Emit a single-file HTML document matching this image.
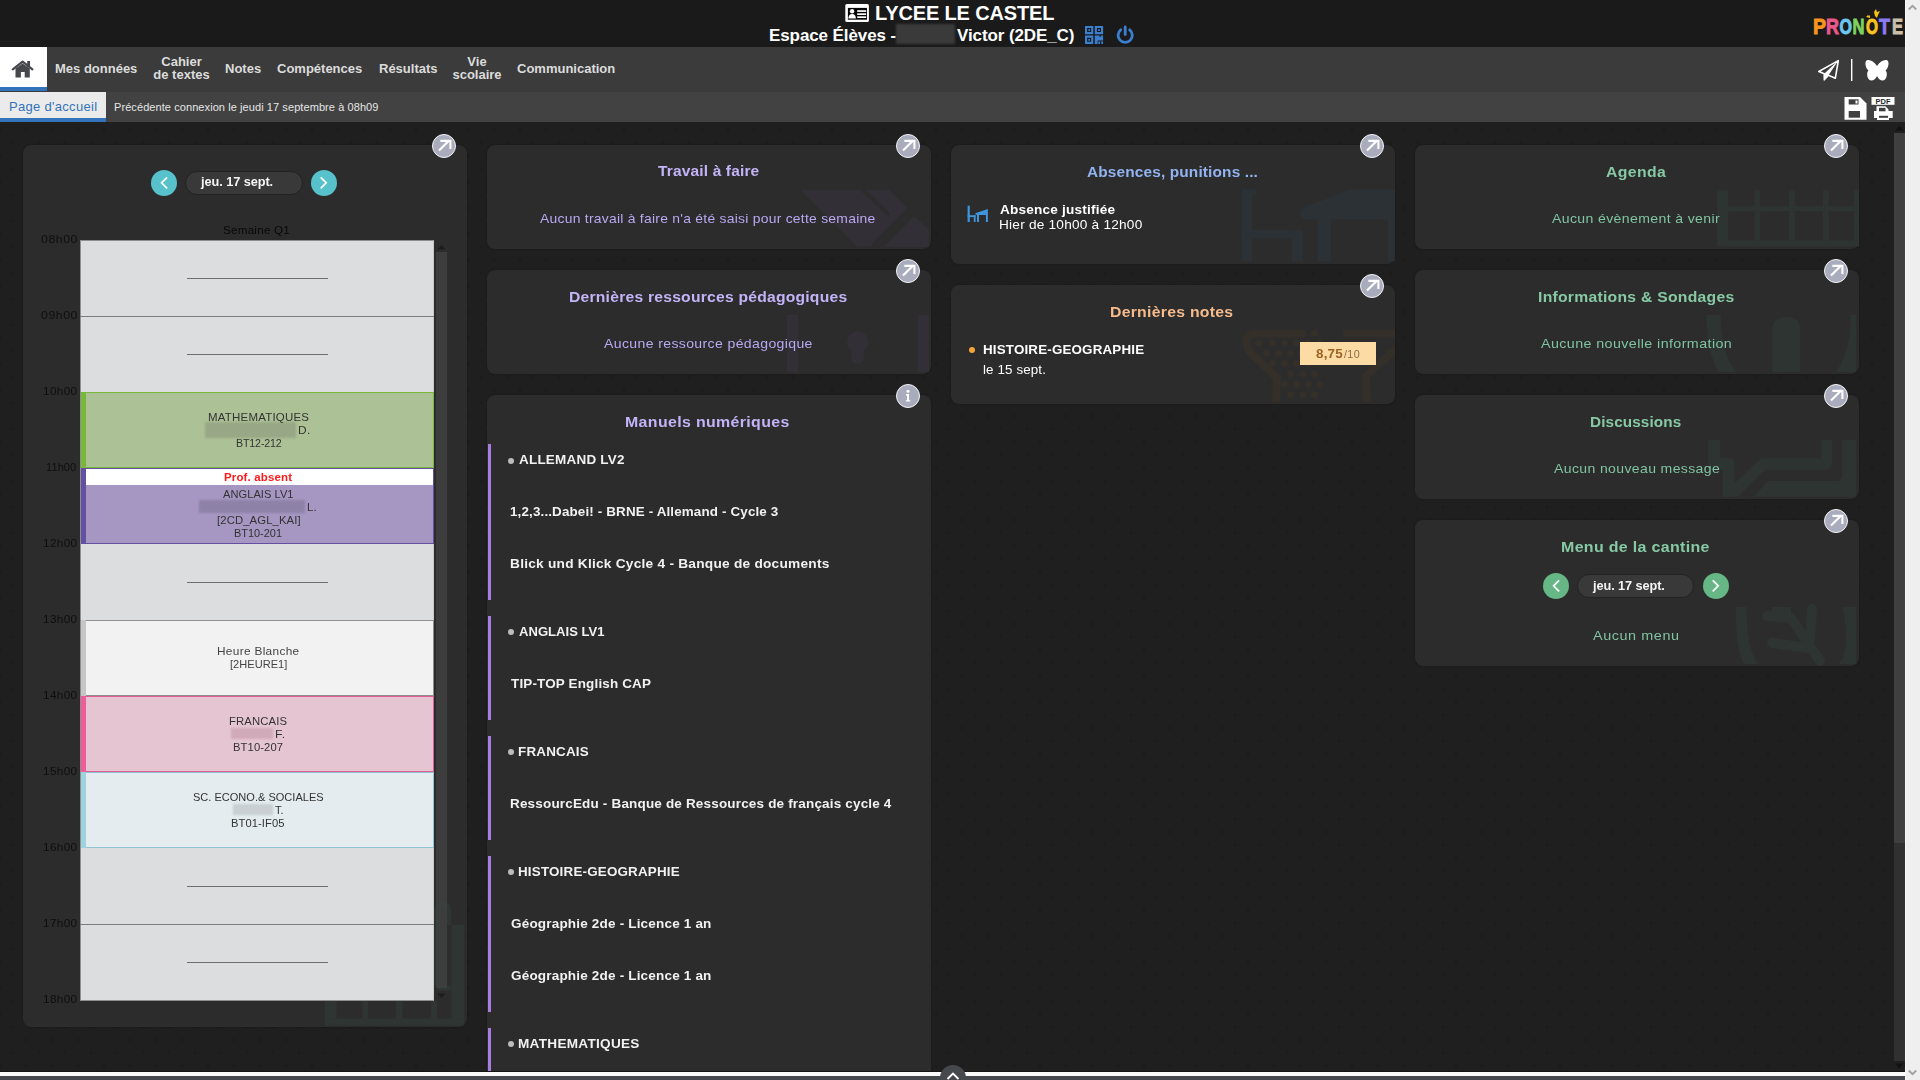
<!DOCTYPE html>
<html lang="fr"><head><meta charset="utf-8">
<style>
*{box-sizing:border-box;margin:0;padding:0}
html,body{width:1920px;height:1080px;overflow:hidden;background:#202020;font-family:"Liberation Sans",sans-serif}
.abs{position:absolute}
#hdr{position:absolute;left:0;top:0;width:1905px;height:47px;background:#1a1a1a}
#nav{position:absolute;left:0;top:47px;width:1905px;height:45px;background:#3b3b3b}
#sub{position:absolute;left:0;top:92px;width:1905px;height:30px;background:#424242}
#page{position:absolute;left:0;top:122px;width:1905px;height:950px;background-color:#1f1f1f;overflow:hidden;
 background-image:radial-gradient(circle at 13px 13px,#1c1c1c 0 1.3px,transparent 1.9px),radial-gradient(circle at 13px 13px,#1c1c1c 0 1.3px,transparent 1.9px);
 background-size:26px 26px,26px 26px;background-position:13px -5px,0px 8px}
#vscroll{position:absolute;left:1905px;top:0;width:15px;height:1080px;background:#efefef;border-left:1px solid #fafafa}
.card{position:absolute;background:#2c2c2c;border-radius:8px;box-shadow:0 0 2px rgba(0,0,0,.35);overflow:hidden}
.exp{position:absolute;width:24px;height:24px;border-radius:50%;background:#a8acbd;border:1px solid #f4f4f4}
.t{position:absolute;white-space:nowrap}
.nav-it{position:absolute;color:#dcdcdc;font-weight:bold;font-size:13px;text-align:center;line-height:13px;white-space:nowrap}
</style></head><body>
<div id="hdr">
 <svg class="abs" style="left:0;top:0" width="1905" height="47" viewBox="0 0 1905 47">
  <rect x="845.3" y="3.9" width="23.6" height="18.1" rx="1.6" fill="#fff"/>
  <rect x="847.9" y="7.9" width="19.1" height="11.8" fill="#050505"/>
  <circle cx="852.1" cy="11.3" r="2.2" fill="#fff"/>
  <path d="M848.4,18.6 Q848.4,13.9 852.1,13.9 Q855.9,13.9 855.9,18.6 Z" fill="#fff"/>
  <rect x="857.2" y="10.2" width="9" height="1.7" fill="#fff"/>
  <rect x="857.2" y="13.3" width="9" height="1.7" fill="#fff"/>
  <rect x="857.2" y="16.3" width="9" height="1.7" fill="#fff"/>
  <g fill="#3b7fd0" fill-rule="evenodd">
   <path d="M1085,25.9h8.3v8.3h-8.3zM1087.1,28v4.1h4.1v-4.1zM1088.3,29.2h1.8v1.8h-1.8z"/>
   <path d="M1094.8,25.9h8.3v8.3h-8.3zM1096.9,28v4.1h4.1v-4.1zM1098.1,29.2h1.8v1.8h-1.8z"/>
   <path d="M1085,35.6h8.3v8.3h-8.3zM1087.1,37.7v4.1h4.1v-4.1zM1088.3,38.9h1.8v1.8h-1.8z"/>
   <path d="M1094.8,35.6h4.6v1.2h1.5v-1.2h2.2v5h-5.5v3.3h-2.8z"/>
   <rect x="1098.3" y="41.5" width="1.8" height="2.4"/><rect x="1101.2" y="41.5" width="1.9" height="2.4"/>
  </g>
  <path d="M1120.7,29.8 A7.1,7.1 0 1 0 1129.7,29.8" fill="none" stroke="#3b7fd0" stroke-width="2.8" stroke-linecap="round"/>
  <line x1="1125.2" y1="27" x2="1125.2" y2="34.5" stroke="#3b7fd0" stroke-width="2.8" stroke-linecap="round"/>
 </svg>
 <div class="abs" style="left:875px;top:3px;font:bold 20px/20px 'Liberation Sans';color:#fff;white-space:nowrap;letter-spacing:-0.15px">LYCEE LE CASTEL</div>
 <div class="abs" style="left:769px;top:27px;font:bold 17px/17px 'Liberation Sans';color:#fff;white-space:nowrap;letter-spacing:-0.1px">Espace Élèves -</div>
 <div class="abs" style="left:896px;top:24px;width:59px;height:20px;background:#3a3a3a;filter:blur(1px)"></div>
 <div class="abs" style="left:957px;top:27px;font:bold 17px/17px 'Liberation Sans';color:#fff;white-space:nowrap;letter-spacing:-0.1px">Victor (2DE_C)</div>
<svg class="abs" style="left:1805px;top:10px" width="100" height="30" viewBox="1805 10 100 30">
  <g font-family="Liberation Sans" font-weight="bold" font-size="21.5">
   <text x="1813" y="34" textLength="13" lengthAdjust="spacingAndGlyphs" fill="#f7941d" stroke="#f7941d" stroke-width="0.9">P</text>
   <text x="1826" y="34" textLength="13" lengthAdjust="spacingAndGlyphs" fill="#e8588a" stroke="#e8588a" stroke-width="0.9">R</text>
   <text x="1839.5" y="34" textLength="12.5" lengthAdjust="spacingAndGlyphs" fill="#6cc8f0" stroke="#6cc8f0" stroke-width="0.9">O</text>
   <text x="1852.5" y="34" textLength="12" lengthAdjust="spacingAndGlyphs" fill="#7ed35e" stroke="#7ed35e" stroke-width="0.9">N</text>
   <text x="1866" y="34" textLength="12" lengthAdjust="spacingAndGlyphs" fill="#f9c31f" stroke="#f9c31f" stroke-width="0.9">O</text>
   <text x="1879" y="34" textLength="11" lengthAdjust="spacingAndGlyphs" fill="#8a7cf0" stroke="#8a7cf0" stroke-width="0.9">T</text>
   <text x="1892" y="34" textLength="11" lengthAdjust="spacingAndGlyphs" fill="#c8bfa6" stroke="#c8bfa6" stroke-width="0.9">E</text>
  </g>
 </svg>
 <svg class="abs" style="left:1865px;top:9px" width="24" height="12" viewBox="0 0 24 12">
  <path d="M1,8 l2,-2 l1,1 l1,-1 l0,3 z" fill="#f2c40f"/>
  <path d="M9,3 l2,-3 l1,3 l3,-1 l-2,4 l-1,3 l-2,-2 z" fill="#f2c40f"/>
 </svg>
</div>
<div id="nav">
 <div class="abs" style="left:0;top:0;width:47px;height:40px;background:#fff"></div>
 <div class="abs" style="left:0;top:40px;width:47px;height:4px;background:#3273ba"></div>
 <svg class="abs" style="left:0;top:0" width="47" height="44" viewBox="0 47 47 44">
  <polyline points="12.8,69.3 22.6,61.6 32.4,69.3" fill="none" stroke="#45474c" stroke-width="2.2" stroke-linecap="round" stroke-linejoin="round"/>
  <rect x="27.2" y="61" width="2.8" height="5.5" fill="#45474c"/>
  <path d="M15.5,68.5 L22.6,63.6 L29.8,68.5 L29.8,77.5 L24.7,77.5 L24.7,72 L20.9,72 L20.9,77.5 L15.5,77.5 Z" fill="#45474c"/>
 </svg>
 <div class="nav-it" style="left:55px;top:15px">Mes données</div>
 <div class="nav-it" style="left:150px;top:8.4px;width:63px">Cahier<br>de textes</div>
 <div class="nav-it" style="left:225px;top:15px">Notes</div>
 <div class="nav-it" style="left:277px;top:15px">Compétences</div>
 <div class="nav-it" style="left:379px;top:15px">Résultats</div>
 <div class="nav-it" style="left:447px;top:8.4px;width:60px">Vie<br>scolaire</div>
 <div class="nav-it" style="left:517px;top:15px">Communication</div>
 <svg class="abs" style="left:0;top:0" width="1905" height="44" viewBox="0 47 1905 44">
  <path d="M1818.8,71.5 L1838.3,60.6 L1835.3,78.3 L1828.5,75.2 L1824.3,79.8 L1824.2,73.8 Z" fill="none" stroke="#fff" stroke-width="1.6" stroke-linejoin="round"/>
  <path d="M1824.2,73.8 L1838.3,60.6 L1828.5,75.2 L1824.3,79.8 Z" fill="#fff"/>
  <rect x="1851" y="59" width="1.4" height="22" fill="#fff"/>
  <path d="M1877,66 C1874,61 1869,59 1866.5,60.5 C1864.5,62 1865.5,68.5 1868.5,70.5 C1866,72.5 1867,80 1871,80.5 C1873.5,80.7 1876,78.5 1877,76 C1878,78.5 1880.5,80.7 1883,80.5 C1887,80 1888,72.5 1885.5,70.5 C1888.5,68.5 1889.5,62 1887.5,60.5 C1885,59 1880,61 1877,66 Z" fill="#fff"/>
 </svg>
</div>
<div id="sub">
 <div class="abs" style="left:0;top:0px;width:106px;height:26px;background:#ebebeb"></div>
 <div class="abs" style="left:0;top:26px;width:106px;height:4px;background:#3273ba"></div>
 <div class="abs" style="left:9px;top:8px;font:13px/13px 'Liberation Sans';color:#3273ba;white-space:nowrap;letter-spacing:0.3px">Page d'accueil</div>
 <div class="abs" style="left:114px;top:10px;font:11px/11px 'Liberation Sans';color:#e6e6e6;white-space:nowrap;letter-spacing:0.08px">Précédente connexion le jeudi 17 septembre à 08h09</div>
 <svg class="abs" style="left:0;top:0" width="1905" height="30" viewBox="0 92 1905 30">
  <path d="M1844.5,97 L1860,97 L1866.5,103.5 L1866.5,119.8 L1844.5,119.8 Z" fill="#fff"/>
  <rect x="1848.7" y="99.3" width="9.8" height="5.2" fill="#3f3f3f"/>
  <rect x="1855.5" y="100.5" width="2" height="3" fill="#fff"/>
  <rect x="1848.7" y="111" width="11.3" height="6.7" fill="#3f3f3f"/>
  <rect x="1871.5" y="97" width="23" height="7.8" fill="#fff"/>
  <text x="1883" y="103.8" text-anchor="middle" font-family="Liberation Sans" font-weight="bold" font-size="7.5" fill="#2a2a2a">PDF</text>
  <path d="M1876.5,106.3 L1885.5,106.3 L1888.5,109.5 L1888.5,111 L1892.7,111 L1892.7,118 L1889,118 L1889,120 L1877,120 L1877,118 L1874,118 L1874,111 L1876.5,111 Z" fill="#fff"/>
  <rect x="1879" y="107.8" width="6.5" height="3.5" fill="#3f3f3f"/>
  <rect x="1879" y="115.8" width="9" height="2" fill="#3f3f3f"/>
 </svg>
</div>

<div id="page"></div>
<div class='card' style='left:23px;top:145px;width:444px;height:882px'></div>
<div class='card' style='left:487px;top:145px;width:444px;height:104px'></div>
<div class='card' style='left:487px;top:270px;width:444px;height:104px'></div>
<div class='card' style='left:487px;top:395px;width:444px;height:720px'></div>
<div class='card' style='left:951px;top:145px;width:444px;height:119px'></div>
<div class='card' style='left:951px;top:285px;width:444px;height:119px'></div>
<div class='card' style='left:1415px;top:145px;width:444px;height:104px'></div>
<div class='card' style='left:1415px;top:270px;width:444px;height:104px'></div>
<div class='card' style='left:1415px;top:395px;width:444px;height:104px'></div>
<div class='card' style='left:1415px;top:520px;width:444px;height:146px'></div>
<svg class='abs' style='left:487px;top:145px' width='444' height='104' viewBox='487 145 444 104'><g fill='#323036'><path d='M801,190 L889,190 L907,208 L870,246 L857,246 Z'/><path d='M884,247 L914,216 L929,230 L929,247 Z'/></g><path d='M862,189 L889,215' stroke='#2c2c2c' stroke-width='4'/></svg>
<svg class='abs' style='left:487px;top:270px' width='444' height='104' viewBox='487 270 444 104'><g fill='#323036'><rect x='787' y='315' width='11' height='57'/><rect x='918' y='315' width='11' height='57'/><circle cx='857.7' cy='342' r='10.6'/><rect x='851.5' y='342' width='12.4' height='22' rx='6'/></g></svg>
<svg class='abs' style='left:951px;top:145px' width='444' height='119' viewBox='951 145 444 119'><g fill='#2b3135'><rect x='1241.7' y='189.6' width='15' height='5.4'/><rect x='1241.7' y='189.6' width='10.7' height='72'/><rect x='1241.7' y='230' width='60.8' height='8.6'/><rect x='1291.8' y='230' width='10.7' height='31.5'/><path d='M1302.5,219.4 Q1296,212 1305,207 L1349.4,189.6 H1395 V219.4 Z'/><rect x='1317.4' y='219' width='13.9' height='42.5'/><rect x='1387.8' y='219' width='7' height='42.5'/></g></svg>
<svg class='abs' style='left:951px;top:285px' width='444' height='119' viewBox='951 285 444 119'><g fill='none' stroke='#352f29' stroke-width='8' stroke-linejoin='round'><path d='M1305,333.5 L1256,333.5 Q1240,335 1250,352 L1277,378 L1276,402'/><path d='M1343,333.5 L1396,333.5 M1396,349 L1366,376 L1367,402'/></g><g fill='#352f29'><circle cx='1302.6' cy='333' r='3.5'/><circle cx='1314.6' cy='333' r='3.5'/><circle cx='1259' cy='343' r='3.5'/><circle cx='1272.5' cy='343' r='3.5'/><circle cx='1284.5' cy='343' r='3.5'/><circle cx='1296' cy='343' r='3.5'/><circle cx='1308' cy='343' r='3.5'/><circle cx='1320' cy='343' r='3.5'/><circle cx='1266.8' cy='353.6' r='3.5'/><circle cx='1278.4' cy='353.6' r='3.5'/><circle cx='1290.4' cy='353.6' r='3.5'/><circle cx='1302' cy='353.6' r='3.5'/><circle cx='1272.5' cy='363.6' r='3.5'/><circle cx='1284.5' cy='363.6' r='3.5'/><circle cx='1296' cy='363.6' r='3.5'/><circle cx='1308' cy='363.6' r='3.5'/><circle cx='1290.4' cy='374' r='3.5'/><circle cx='1302.6' cy='374' r='3.5'/><circle cx='1314.6' cy='374' r='3.5'/><circle cx='1284.5' cy='384.6' r='3.5'/><circle cx='1296.6' cy='384.6' r='3.5'/><circle cx='1308.5' cy='384.6' r='3.5'/><circle cx='1320' cy='384.6' r='3.5'/><circle cx='1290.4' cy='395' r='3.5'/><circle cx='1302.6' cy='395' r='3.5'/><circle cx='1314.6' cy='395' r='3.5'/></g></svg>
<svg class='abs' style='left:1415px;top:145px' width='444' height='104' viewBox='1415 145 444 104'><g fill='#2e3432'><rect x='1717.3' y='190.2' width='11' height='56.2'/><rect x='1754.5' y='190.2' width='5.7' height='56.2'/><rect x='1789' y='190.2' width='5.8' height='56.2'/><rect x='1823' y='190.2' width='5.9' height='56.2'/><rect x='1854' y='190.2' width='5' height='56.2'/><rect x='1728' y='206.1' width='131' height='5.3'/><rect x='1728' y='240.2' width='131' height='6.2'/></g></svg>
<svg class='abs' style='left:1415px;top:270px' width='444' height='104' viewBox='1415 270 444 104'><g fill='#2e3432'><path d='M1706.8,315 H1720.7 Q1720,350 1736.3,372 H1718.6 Q1706,350 1706.8,315 Z'/><path d='M1850.6,315 H1856 V372 H1835.9 Q1851,350 1850.6,315 Z'/><path d='M1772.2,372 V331 Q1772.2,316.8 1786.3,316.8 Q1800.4,316.8 1800.4,331 V372 Z'/></g></svg>
<svg class='abs' style='left:1415px;top:395px' width='444' height='104' viewBox='1415 395 444 104'><g fill='#2e3432'><path d='M1708,440 H1720 V457.8 H1728 Q1734.6,457.8 1734.6,464 V483 L1761,458.3 H1821.5 V440 H1832 V463 Q1832,469.7 1825,469.7 H1765 L1737.5,496.7 H1722.8 V469.7 H1708 Z'/><path d='M1842.2,440 H1856 V496.7 H1754 L1767.5,481 H1836 Q1842.2,481 1842.2,475 Z'/></g></svg>
<svg class='abs' style='left:1415px;top:520px' width='444' height='146' viewBox='1415 520 444 146'><g fill='#2e3432'><path d='M1736,607 H1746.8 Q1746,648 1758.2,664 H1744 Q1735,648 1736,607 Z'/><path d='M1842.6,607 H1856 V664 H1839.2 Q1851,648 1842.6,607 Z'/></g><g fill='none' stroke='#2e3432' stroke-width='10' stroke-linecap='round' stroke-linejoin='round'><path d='M1767,616 L1791,618 L1820,661'/><path d='M1772,643 L1808,648'/><path d='M1812,609 L1810,640'/></g><rect x='1772' y='607' width='19' height='8' fill='#2e3432'/></svg>
<div class='abs' style='left:80px;top:240px;width:354px;height:761px;background:#dcdddf;border-left:1px solid #8e8e8e;border-top:1px solid #8e8e8e;border-right:1px solid #c8c8c8;border-bottom:1px solid #8e8e8e'></div>
<div class='abs' style='left:80px;top:316px;width:354px;height:1px;background:#7c7c7c;'></div>
<div class='abs' style='left:80px;top:620px;width:354px;height:1px;background:#7c7c7c;'></div>
<div class='abs' style='left:80px;top:924px;width:354px;height:1px;background:#7c7c7c;'></div>
<div class='abs' style='left:187px;top:278px;width:141px;height:1px;background:#6e6e6e;'></div>
<div class='abs' style='left:187px;top:354px;width:141px;height:1px;background:#6e6e6e;'></div>
<div class='abs' style='left:187px;top:582px;width:141px;height:1px;background:#6e6e6e;'></div>
<div class='abs' style='left:187px;top:886px;width:141px;height:1px;background:#6e6e6e;'></div>
<div class='abs' style='left:187px;top:962px;width:141px;height:1px;background:#6e6e6e;'></div>
<div class='abs' style='left:81px;top:392px;width:353px;height:76px;background:#adc196;border:1px solid #78b83a'></div>
<div class='abs' style='left:81px;top:392px;width:5px;height:76px;background:#78b83a;'></div>
<div class='abs' style='left:81px;top:468px;width:353px;height:76px;background:#a596c2;border:1px solid #6450a3'></div>
<div class='abs' style='left:81px;top:468px;width:5px;height:76px;background:#6450a3;'></div>
<div class='abs' style='left:81px;top:620px;width:353px;height:76px;background:#f2f2f2;border:1px solid #8e8e8e'></div>
<div class='abs' style='left:81px;top:620px;width:5px;height:76px;background:#c6c6c6;'></div>
<div class='abs' style='left:81px;top:696px;width:353px;height:76px;background:#e6c5d2;border:1px solid #e35d95'></div>
<div class='abs' style='left:81px;top:696px;width:5px;height:76px;background:#ee5c9a;'></div>
<div class='abs' style='left:81px;top:772px;width:353px;height:76px;background:#e4ecef;border:1px solid #8fc4d1'></div>
<div class='abs' style='left:81px;top:772px;width:5px;height:76px;background:#9dd2df;'></div>
<div class='abs' style='left:86px;top:469px;width:347px;height:16px;background:#ffffff;'></div>
<div class='abs' style='left:205px;top:422px;width:91px;height:16px;background:#98a886;filter:blur(1px)'></div>
<div class='abs' style='left:199px;top:500px;width:106px;height:13px;background:#8f82a8;filter:blur(1px)'></div>
<div class='abs' style='left:231px;top:728px;width:42px;height:11px;background:#d0aab8;filter:blur(1px)'></div>
<div class='abs' style='left:233px;top:804px;width:40px;height:11px;background:#c9cfd2;filter:blur(1px)'></div>
<div class='abs' style='left:436px;top:252px;width:11px;height:736px;background:#3d3d3d;'></div>
<svg class='abs' style='left:436px;top:243px' width='11' height='8'><path d='M1.5,6.5 L5.5,2 L9.5,6.5 Z' fill='#1c1c1c'/></svg>
<svg class='abs' style='left:436px;top:992px' width='11' height='8'><path d='M1.5,1.5 L5.5,6 L9.5,1.5 Z' fill='#1c1c1c'/></svg>
<svg class='abs' style='left:23px;top:145px' width='444' height='882' viewBox='23 145 444 882'><g fill='rgba(52,72,68,0.33)'><rect x='325' y='1018.4' width='139.2' height='7.2'/><rect x='325' y='1001' width='11.5' height='17.4'/><rect x='362.4' y='1001' width='5.6' height='17.4'/><rect x='396' y='1001' width='6.5' height='17.4'/><rect x='431' y='1001' width='6' height='17.4'/><rect x='451.3' y='925' width='12.9' height='93.4'/><rect x='437' y='985.5' width='14.3' height='5'/><path d='M434,989 V912 Q434,901.5 443,901.5 Q451.3,901.5 451.3,912 V925 H445.5 V912 Q445.5,907.5 443,907.5 Q440,907.5 440,912 V985.5 H434 Z'/></g></svg>
<div class='abs' style='left:151px;top:170px;width:26px;height:26px;border-radius:50%;background:#57c2cc'><svg width='26' height='26' style='position:absolute;left:0;top:0'><path d='M15.5,7.9 L10.6,12.8 L15.5,17.7' fill='none' stroke='#fff' stroke-width='1.7' stroke-linecap='square' stroke-linejoin='miter'/></svg></div>
<div class='abs' style='left:311px;top:170px;width:26px;height:26px;border-radius:50%;background:#57c2cc'><svg width='26' height='26' style='position:absolute;left:0;top:0'><path d='M10.3,7.9 L15.2,12.8 L10.3,17.7' fill='none' stroke='#fff' stroke-width='1.7' stroke-linecap='square' stroke-linejoin='miter'/></svg></div>
<div class='abs' style='left:185px;top:171px;width:118px;height:24px;border-radius:12px;background:#393939;border:1px solid #222'></div>
<div class='abs' style='left:1543px;top:573px;width:26px;height:26px;border-radius:50%;background:#66b686'><svg width='26' height='26' style='position:absolute;left:0;top:0'><path d='M15.5,7.9 L10.6,12.8 L15.5,17.7' fill='none' stroke='#fff' stroke-width='1.7' stroke-linecap='square' stroke-linejoin='miter'/></svg></div>
<div class='abs' style='left:1703px;top:573px;width:26px;height:26px;border-radius:50%;background:#66b686'><svg width='26' height='26' style='position:absolute;left:0;top:0'><path d='M10.3,7.9 L15.2,12.8 L10.3,17.7' fill='none' stroke='#fff' stroke-width='1.7' stroke-linecap='square' stroke-linejoin='miter'/></svg></div>
<div class='abs' style='left:1577px;top:574px;width:117px;height:24px;border-radius:12px;background:#393939;border:1px solid #222'></div>
<svg class='abs' style='left:966px;top:204px' width='24' height='20' viewBox='966 204 24 20'><g fill='#3f95db'><rect x='967.6' y='205.7' width='2.2' height='16.3'/><rect x='967.6' y='215.2' width='7.9' height='1.9'/><rect x='973.8' y='215.2' width='1.8' height='6.8'/><path d='M975.2,213.2 L987.9,209 L987.9,222 L985.9,222 L985.9,215 L979,215 L979,222 L977,222 L977,215 Q975,214.8 975.2,213.2 Z'/></g></svg>
<div class='abs' style='left:969px;top:346.5px;width:6px;height:6px;border-radius:50%;background:#f5a33b'></div>
<div class='abs' style='left:1300px;top:342px;width:76px;height:23px;background:#fddba5;'></div>
<div class='abs' style='left:488px;top:444px;width:3px;height:156px;background:#a77de0;'></div>
<div class='abs' style='left:508px;top:457.5px;width:6px;height:6px;border-radius:50%;background:#bdbdbd'></div>
<div class='abs' style='left:488px;top:616px;width:3px;height:104px;background:#a77de0;'></div>
<div class='abs' style='left:508px;top:629px;width:6px;height:6px;border-radius:50%;background:#bdbdbd'></div>
<div class='abs' style='left:488px;top:736px;width:3px;height:104px;background:#a77de0;'></div>
<div class='abs' style='left:508px;top:749px;width:6px;height:6px;border-radius:50%;background:#bdbdbd'></div>
<div class='abs' style='left:488px;top:856px;width:3px;height:156px;background:#a77de0;'></div>
<div class='abs' style='left:508px;top:869px;width:6px;height:6px;border-radius:50%;background:#bdbdbd'></div>
<div class='abs' style='left:488px;top:1028px;width:3px;height:52px;background:#a77de0;'></div>
<div class='abs' style='left:508px;top:1041px;width:6px;height:6px;border-radius:50%;background:#bdbdbd'></div>
<div class='abs' style='left:0;top:1071px;width:1905px;height:1px;background:#151515;z-index:5'></div>
<div class='abs' style='left:0;top:1072px;width:1905px;height:4px;background:#fafafa;z-index:5'></div>
<div class='abs' style='left:0;top:1076px;width:1905px;height:4px;background:#45484d;z-index:5'></div>
<div class='abs' style='left:940px;top:1065px;width:26px;height:26px;border-radius:50%;background:#45484d;z-index:6'><svg width='26' height='26' style='position:absolute;left:0;top:0'><path d='M7.5,14 L13,8.5 L18.5,14' fill='none' stroke='#fff' stroke-width='1.8'/></svg></div>
<div class='abs' style='left:1894px;top:133px;width:10.5px;height:928px;background:#303030;'></div>
<div class='abs' style='left:1894px;top:133px;width:10.5px;height:710px;background:#3f3f3f;'></div>
<div class='abs' style='left:1904.5px;top:122px;width:0.8px;height:950px;background:#151515;'></div>
<svg class='abs' style='left:1894px;top:1062px' width='11' height='9'><path d='M1.5,1.5 L5.5,6.5 L9.5,1.5 Z' fill='#121212'/></svg>
<svg class='abs' style='left:1894px;top:124px' width='11' height='8'><path d='M1.5,6.5 L5.5,2 L9.5,6.5 Z' fill='#121212'/></svg>
<svg class='abs' style='left:1905px;top:0;z-index:7' width='15' height='1080'><path d='M3.8,9.5 L7.5,5.8 L11.2,9.5' fill='none' stroke='#a3a3a3' stroke-width='2'/><path d='M3.8,1070.5 L7.5,1074.2 L11.2,1070.5' fill='none' stroke='#a3a3a3' stroke-width='2'/></svg>
<div class='exp' style='left:432px;top:134px'><svg width='24' height='24' viewBox='0 0 24 24' style='position:absolute;left:-1px;top:-1px'><path d='M7,16.6 L17.4,6.2 M8.4,6.9 H18.4 V15' fill='none' stroke='#fff' stroke-width='2.1'/></svg></div>
<div class='exp' style='left:896px;top:134px'><svg width='24' height='24' viewBox='0 0 24 24' style='position:absolute;left:-1px;top:-1px'><path d='M7,16.6 L17.4,6.2 M8.4,6.9 H18.4 V15' fill='none' stroke='#fff' stroke-width='2.1'/></svg></div>
<div class='exp' style='left:896px;top:259px'><svg width='24' height='24' viewBox='0 0 24 24' style='position:absolute;left:-1px;top:-1px'><path d='M7,16.6 L17.4,6.2 M8.4,6.9 H18.4 V15' fill='none' stroke='#fff' stroke-width='2.1'/></svg></div>
<div class='exp' style='left:1360px;top:134px'><svg width='24' height='24' viewBox='0 0 24 24' style='position:absolute;left:-1px;top:-1px'><path d='M7,16.6 L17.4,6.2 M8.4,6.9 H18.4 V15' fill='none' stroke='#fff' stroke-width='2.1'/></svg></div>
<div class='exp' style='left:1360px;top:274px'><svg width='24' height='24' viewBox='0 0 24 24' style='position:absolute;left:-1px;top:-1px'><path d='M7,16.6 L17.4,6.2 M8.4,6.9 H18.4 V15' fill='none' stroke='#fff' stroke-width='2.1'/></svg></div>
<div class='exp' style='left:1824px;top:134px'><svg width='24' height='24' viewBox='0 0 24 24' style='position:absolute;left:-1px;top:-1px'><path d='M7,16.6 L17.4,6.2 M8.4,6.9 H18.4 V15' fill='none' stroke='#fff' stroke-width='2.1'/></svg></div>
<div class='exp' style='left:1824px;top:259px'><svg width='24' height='24' viewBox='0 0 24 24' style='position:absolute;left:-1px;top:-1px'><path d='M7,16.6 L17.4,6.2 M8.4,6.9 H18.4 V15' fill='none' stroke='#fff' stroke-width='2.1'/></svg></div>
<div class='exp' style='left:1824px;top:384px'><svg width='24' height='24' viewBox='0 0 24 24' style='position:absolute;left:-1px;top:-1px'><path d='M7,16.6 L17.4,6.2 M8.4,6.9 H18.4 V15' fill='none' stroke='#fff' stroke-width='2.1'/></svg></div>
<div class='exp' style='left:1824px;top:509px'><svg width='24' height='24' viewBox='0 0 24 24' style='position:absolute;left:-1px;top:-1px'><path d='M7,16.6 L17.4,6.2 M8.4,6.9 H18.4 V15' fill='none' stroke='#fff' stroke-width='2.1'/></svg></div>
<div class='exp' style='left:896px;top:384px'><svg width='24' height='24' viewBox='0 0 24 24' style='position:absolute;left:-1px;top:-1px'><circle cx='12' cy='7.3' r='1.5' fill='#fff'/><path d='M10,10 L13,10 L13,16.2 L14.3,16.2 L14.3,17.6 L9.8,17.6 L9.8,16.2 L11,16.2 L11,11.4 L10,11.4 Z' fill='#fff'/></svg></div>
<div class='t' style='left:657.5px;top:163.29px;font-size:15px;line-height:15px;font-weight:bold;letter-spacing:0.147px;color:#c3b3f7;transform:scaleX(1.0331);transform-origin:0 0;'>Travail à faire</div>
<div class='t' style='left:540.3px;top:211.99px;font-size:13px;line-height:13px;font-weight:normal;letter-spacing:0.242px;color:#b9a8f2;transform:scaleX(1.0684);transform-origin:0 0;'>Aucun travail à faire n'a été saisi pour cette semaine</div>
<div class='t' style='left:568.76px;top:288.80px;font-size:15px;line-height:15px;font-weight:bold;letter-spacing:0.225px;color:#c3b3f7;transform:scaleX(1.0437);transform-origin:0 0;'>Dernières ressources pédagogiques</div>
<div class='t' style='left:604.0px;top:337.49px;font-size:13px;line-height:13px;font-weight:normal;letter-spacing:0.34px;color:#b9a8f2;transform:scaleX(1.0813);transform-origin:0 0;'>Aucune ressource pédagogique</div>
<div class='t' style='left:625.34px;top:413.80px;font-size:15px;line-height:15px;font-weight:bold;letter-spacing:0.333px;color:#c3b3f7;transform:scaleX(1.0608);transform-origin:0 0;'>Manuels numériques</div>
<div class='t' style='left:1086.7px;top:163.79px;font-size:15px;line-height:15px;font-weight:bold;letter-spacing:0.133px;color:#92b3f0;transform:scaleX(1.0276);transform-origin:0 0;'>Absences, punitions ...</div>
<div class='t' style='left:1110.35px;top:303.80px;font-size:15px;line-height:15px;font-weight:bold;letter-spacing:0.261px;color:#f6bb8c;transform:scaleX(1.0514);transform-origin:0 0;'>Dernières notes</div>
<div class='t' style='left:1606.0px;top:163.79px;font-size:15px;line-height:15px;font-weight:bold;letter-spacing:0.365px;color:#86c9a4;transform:scaleX(1.0524);transform-origin:0 0;'>Agenda</div>
<div class='t' style='left:1552.2px;top:211.99px;font-size:13px;line-height:13px;font-weight:normal;letter-spacing:0.339px;color:#7fc3a0;transform:scaleX(1.0824);transform-origin:0 0;'>Aucun évènement à venir</div>
<div class='t' style='left:1537.85px;top:288.80px;font-size:15px;line-height:15px;font-weight:bold;letter-spacing:0.25px;color:#86c9a4;transform:scaleX(1.048);transform-origin:0 0;'>Informations &amp; Sondages</div>
<div class='t' style='left:1541.0px;top:337.49px;font-size:13px;line-height:13px;font-weight:normal;letter-spacing:0.373px;color:#7fc3a0;transform:scaleX(1.0979);transform-origin:0 0;'>Aucune nouvelle information</div>
<div class='t' style='left:1589.98px;top:413.80px;font-size:15px;line-height:15px;font-weight:bold;letter-spacing:0.114px;color:#86c9a4;transform:scaleX(1.02);transform-origin:0 0;'>Discussions</div>
<div class='t' style='left:1553.5px;top:462.29px;font-size:13px;line-height:13px;font-weight:normal;letter-spacing:0.352px;color:#7fc3a0;transform:scaleX(1.0781);transform-origin:0 0;'>Aucun nouveau message</div>
<div class='t' style='left:1561.34px;top:538.59px;font-size:15px;line-height:15px;font-weight:bold;letter-spacing:0.314px;color:#86c9a4;transform:scaleX(1.0641);transform-origin:0 0;'>Menu de la cantine</div>
<div class='t' style='left:1593.3px;top:628.99px;font-size:13px;line-height:13px;font-weight:normal;letter-spacing:0.518px;color:#7fc3a0;transform:scaleX(1.1075);transform-origin:0 0;'>Aucun menu</div>
<div class='t' style='left:1000.4px;top:202.69px;font-size:13px;line-height:13px;font-weight:bold;letter-spacing:0.196px;color:#ffffff;transform:scaleX(1.046);transform-origin:0 0;'>Absence justifiée</div>
<div class='t' style='left:999.35px;top:217.59px;font-size:13px;line-height:13px;font-weight:normal;letter-spacing:0.208px;color:#ffffff;transform:scaleX(1.0499);transform-origin:0 0;'>Hier de 10h00 à 12h00</div>
<div class='t' style='left:983.17px;top:342.99px;font-size:13px;line-height:13px;font-weight:bold;letter-spacing:0.16px;color:#ffffff;transform:scaleX(1.0292);transform-origin:0 0;'>HISTOIRE-GEOGRAPHIE</div>
<div class='t' style='left:983.17px;top:362.99px;font-size:13px;line-height:13px;font-weight:normal;letter-spacing:0.109px;color:#ffffff;transform:scaleX(1.029);transform-origin:0 0;'>le 15 sept.</div>
<div class='t' style='left:519.0px;top:453.39px;font-size:13px;line-height:13px;font-weight:bold;letter-spacing:0.211px;color:#f2f2f2;transform:scaleX(1.0364);transform-origin:0 0;'>ALLEMAND LV2</div>
<div class='t' style='left:509.87px;top:504.59px;font-size:13px;line-height:13px;font-weight:bold;letter-spacing:0.129px;color:#f2f2f2;transform:scaleX(1.0325);transform-origin:0 0;'>1,2,3...Dabei! - BRNE - Allemand - Cycle 3</div>
<div class='t' style='left:509.95px;top:556.69px;font-size:13px;line-height:13px;font-weight:bold;letter-spacing:0.224px;color:#f2f2f2;transform:scaleX(1.0534);transform-origin:0 0;'>Blick und Klick Cycle 4 - Banque de documents</div>
<div class='t' style='left:519.0px;top:624.99px;font-size:13px;line-height:13px;font-weight:bold;letter-spacing:0.024px;color:#f2f2f2;transform:scaleX(1.0042);transform-origin:0 0;'>ANGLAIS LV1</div>
<div class='t' style='left:511.0px;top:676.99px;font-size:13px;line-height:13px;font-weight:bold;letter-spacing:0.161px;color:#f2f2f2;transform:scaleX(1.0341);transform-origin:0 0;'>TIP-TOP English CAP</div>
<div class='t' style='left:517.97px;top:744.99px;font-size:13px;line-height:13px;font-weight:bold;letter-spacing:0.194px;color:#f2f2f2;transform:scaleX(1.0318);transform-origin:0 0;'>FRANCAIS</div>
<div class='t' style='left:509.96px;top:796.99px;font-size:13px;line-height:13px;font-weight:bold;letter-spacing:0.167px;color:#f2f2f2;transform:scaleX(1.0385);transform-origin:0 0;'>RessourcEdu - Banque de Ressources de français cycle 4</div>
<div class='t' style='left:517.97px;top:864.99px;font-size:13px;line-height:13px;font-weight:bold;letter-spacing:0.172px;color:#f2f2f2;transform:scaleX(1.0316);transform-origin:0 0;'>HISTOIRE-GEOGRAPHIE</div>
<div class='t' style='left:511.0px;top:916.99px;font-size:13px;line-height:13px;font-weight:bold;letter-spacing:0.172px;color:#f2f2f2;transform:scaleX(1.0401);transform-origin:0 0;'>Géographie 2de - Licence 1 an</div>
<div class='t' style='left:511.0px;top:968.99px;font-size:13px;line-height:13px;font-weight:bold;letter-spacing:0.172px;color:#f2f2f2;transform:scaleX(1.0401);transform-origin:0 0;'>Géographie 2de - Licence 1 an</div>
<div class='t' style='left:517.95px;top:1036.99px;font-size:13px;line-height:13px;font-weight:bold;letter-spacing:0.271px;color:#f2f2f2;transform:scaleX(1.0455);transform-origin:0 0;'>MATHEMATIQUES</div>
<div class='t' style='left:201.3px;top:175.49px;font-size:13px;line-height:13px;font-weight:bold;letter-spacing:-0.078px;color:#f4f4f4;transform:scaleX(0.9814);transform-origin:0 0;'>jeu. 17 sept.</div>
<div class='t' style='left:222.64px;top:224.68px;font-size:11px;line-height:11px;font-weight:normal;letter-spacing:0.236px;color:#080808;transform:scaleX(1.056);transform-origin:0 0;'>Semaine Q1</div>
<div class='t' style='left:1593.3px;top:578.99px;font-size:13px;line-height:13px;font-weight:bold;letter-spacing:-0.085px;color:#f4f4f4;transform:scaleX(0.9797);transform-origin:0 0;'>jeu. 17 sept.</div>
<div class='t' style='left:1315.6px;top:346.99px;font-size:13px;line-height:13px;font-weight:bold;letter-spacing:0.168px;color:#9c6526;transform:scaleX(1.0312);transform-origin:0 0;'>8,75</div>
<div class='t' style='left:1344.0px;top:349.53px;font-size:10px;line-height:10px;font-weight:normal;letter-spacing:0.334px;color:#8f6c45;transform:scaleX(1.0771);transform-origin:0 0;'>/10</div>
<div class='t' style='left:207.56px;top:412.18px;font-size:11px;line-height:11px;font-weight:normal;letter-spacing:0.211px;color:#333333;transform:scaleX(1.0426);transform-origin:0 0;'>MATHEMATIQUES</div>
<div class='t' style='left:298.32px;top:424.98px;font-size:11px;line-height:11px;font-weight:normal;letter-spacing:0.444px;color:#333333;transform:scaleX(1.08);transform-origin:0 0;'>D.</div>
<div class='t' style='left:235.73px;top:437.88px;font-size:11px;line-height:11px;font-weight:normal;letter-spacing:-0.148px;color:#333333;transform:scaleX(0.9681);transform-origin:0 0;'>BT12-212</div>
<div class='t' style='left:223.76px;top:471.88px;font-size:11px;line-height:11px;font-weight:bold;letter-spacing:0.154px;color:#ff1a1a;transform:scaleX(1.0419);transform-origin:0 0;'>Prof. absent</div>
<div class='t' style='left:223.3px;top:488.58px;font-size:11px;line-height:11px;font-weight:normal;letter-spacing:0.04px;color:#333333;transform:scaleX(1.0087);transform-origin:0 0;'>ANGLAIS LV1</div>
<div class='t' style='left:306.77px;top:501.88px;font-size:11px;line-height:11px;font-weight:normal;letter-spacing:0.155px;color:#333333;transform:scaleX(1.0343);transform-origin:0 0;'>L.</div>
<div class='t' style='left:216.77px;top:514.88px;font-size:11px;line-height:11px;font-weight:normal;letter-spacing:0.114px;color:#333333;transform:scaleX(1.0269);transform-origin:0 0;'>[2CD_AGL_KAI]</div>
<div class='t' style='left:234.2px;top:527.88px;font-size:11px;line-height:11px;font-weight:normal;letter-spacing:-0.017px;color:#333333;transform:scaleX(0.9962);transform-origin:0 0;'>BT10-201</div>
<div class='t' style='left:216.82px;top:645.98px;font-size:11px;line-height:11px;font-weight:normal;letter-spacing:0.288px;color:#444444;transform:scaleX(1.0775);transform-origin:0 0;'>Heure Blanche</div>
<div class='t' style='left:229.8px;top:658.88px;font-size:11px;line-height:11px;font-weight:normal;letter-spacing:0.02px;color:#444444;transform:scaleX(1.0044);transform-origin:0 0;'>[2HEURE1]</div>
<div class='t' style='left:229.47px;top:715.78px;font-size:11px;line-height:11px;font-weight:normal;letter-spacing:0.134px;color:#333333;transform:scaleX(1.0267);transform-origin:0 0;'>FRANCAIS</div>
<div class='t' style='left:274.58px;top:728.68px;font-size:11px;line-height:11px;font-weight:normal;letter-spacing:0.5px;color:#333333;transform:scaleX(1.12);transform-origin:0 0;'>F.</div>
<div class='t' style='left:233.18px;top:741.68px;font-size:11px;line-height:11px;font-weight:normal;letter-spacing:0.095px;color:#333333;transform:scaleX(1.0217);transform-origin:0 0;'>BT10-207</div>
<div class='t' style='left:192.8px;top:791.78px;font-size:11px;line-height:11px;font-weight:normal;letter-spacing:0.008px;color:#333333;transform:scaleX(1.0019);transform-origin:0 0;'>SC. ECONO.&amp; SOCIALES</div>
<div class='t' style='left:275.0px;top:804.78px;font-size:11px;line-height:11px;font-weight:normal;letter-spacing:-0.04px;color:#333333;transform:scaleX(0.9925);transform-origin:0 0;'>T.</div>
<div class='t' style='left:231.28px;top:817.78px;font-size:11px;line-height:11px;font-weight:normal;letter-spacing:0.069px;color:#333333;transform:scaleX(1.0165);transform-origin:0 0;'>BT01-IF05</div>
<div class='t' style='left:41.1px;top:234.48px;font-size:11px;line-height:11px;font-weight:normal;letter-spacing:0.512px;color:#0e0e0e;transform:scaleX(1.114);transform-origin:0 0;'>08h00</div>
<div class='t' style='left:41.1px;top:310.48px;font-size:11px;line-height:11px;font-weight:normal;letter-spacing:0.512px;color:#0e0e0e;transform:scaleX(1.114);transform-origin:0 0;'>09h00</div>
<div class='t' style='left:43.33px;top:386.48px;font-size:11px;line-height:11px;font-weight:normal;letter-spacing:0.318px;color:#0e0e0e;transform:scaleX(1.0703);transform-origin:0 0;'>10h00</div>
<div class='t' style='left:46.29px;top:462.48px;font-size:11px;line-height:11px;font-weight:normal;letter-spacing:0.049px;color:#0e0e0e;transform:scaleX(1.0103);transform-origin:0 0;'>11h00</div>
<div class='t' style='left:43.33px;top:538.48px;font-size:11px;line-height:11px;font-weight:normal;letter-spacing:0.318px;color:#0e0e0e;transform:scaleX(1.0703);transform-origin:0 0;'>12h00</div>
<div class='t' style='left:43.33px;top:614.48px;font-size:11px;line-height:11px;font-weight:normal;letter-spacing:0.318px;color:#0e0e0e;transform:scaleX(1.0703);transform-origin:0 0;'>13h00</div>
<div class='t' style='left:43.33px;top:690.48px;font-size:11px;line-height:11px;font-weight:normal;letter-spacing:0.318px;color:#0e0e0e;transform:scaleX(1.0703);transform-origin:0 0;'>14h00</div>
<div class='t' style='left:43.33px;top:766.48px;font-size:11px;line-height:11px;font-weight:normal;letter-spacing:0.318px;color:#0e0e0e;transform:scaleX(1.0703);transform-origin:0 0;'>15h00</div>
<div class='t' style='left:43.33px;top:842.48px;font-size:11px;line-height:11px;font-weight:normal;letter-spacing:0.318px;color:#0e0e0e;transform:scaleX(1.0703);transform-origin:0 0;'>16h00</div>
<div class='t' style='left:43.33px;top:918.48px;font-size:11px;line-height:11px;font-weight:normal;letter-spacing:0.318px;color:#0e0e0e;transform:scaleX(1.0703);transform-origin:0 0;'>17h00</div>
<div class='t' style='left:43.33px;top:994.48px;font-size:11px;line-height:11px;font-weight:normal;letter-spacing:0.318px;color:#0e0e0e;transform:scaleX(1.0703);transform-origin:0 0;'>18h00</div>
<!--BOTTOM-->
<div id="vscroll"></div>
</body></html>
